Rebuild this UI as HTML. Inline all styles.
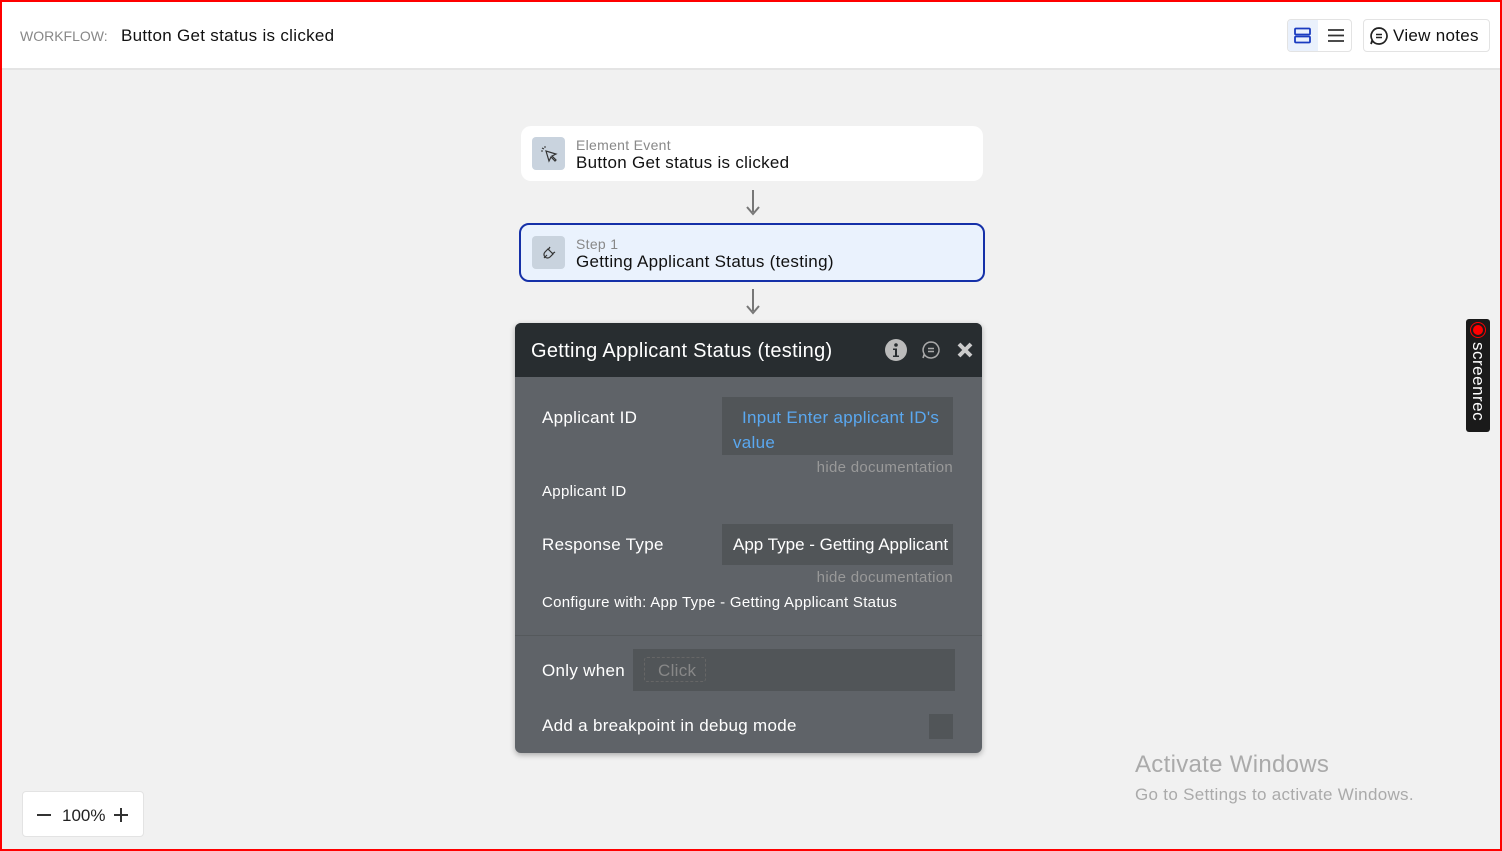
<!DOCTYPE html>
<html><head><meta charset="utf-8"><style>
*{box-sizing:border-box;margin:0;padding:0}
body{width:1502px;height:851px;overflow:hidden;font-family:"Liberation Sans",sans-serif;background:#f1f1f1;position:relative;letter-spacing:0.3px}
.frame{position:absolute;inset:0;border:2px solid #f00;pointer-events:none;z-index:10}
.hdr{position:absolute;left:0;top:0;width:1502px;height:70px;background:#fff;border-bottom:2px solid #e4e4e4}
.abs{position:absolute}
.card{position:absolute;background:#fff;border-radius:10px}
.ico{position:absolute;width:33px;height:33px;background:#c9d3de;border-radius:4px}
.small{font-size:14px;color:#888}
.big{font-size:17px;color:#111}
.panel{position:absolute;left:515px;top:323px;width:467px;height:430px;background:#5f6368;border-radius:6px;box-shadow:0 2px 6px rgba(0,0,0,.3);overflow:hidden}
.ph{height:54px;background:#282d30;color:#fff;font-size:20px;padding:17px 16px}
.lbl{position:absolute;color:#fff;font-size:17px}
.box{position:absolute;background:#515558}
.doc{position:absolute;color:#999;font-size:15px;right:29px;text-align:right}
</style></head><body>
<div class="hdr">
 <div class="abs" style="left:20px;top:28px;font-size:14px;color:#888;letter-spacing:0">WORKFLOW:</div>
 <div class="abs" style="left:121px;top:26px;font-size:17px;color:#111">Button Get status is clicked</div>
 <div class="abs" style="left:1287px;top:19px;width:65px;height:33px;border:1px solid #e3e3e3;border-radius:4px;background:#fff"></div>
 <div class="abs" style="left:1288px;top:20px;width:30px;height:31px;background:#eaf1fc;border-radius:3px 0 0 3px"></div>
 <svg class="abs" style="left:1293px;top:27px" width="20" height="17"><rect x="2" y="1.5" width="15" height="6" rx="1" fill="none" stroke="#1a3bc0" stroke-width="1.8"/><rect x="2" y="9.5" width="15" height="6" rx="1" fill="none" stroke="#1a3bc0" stroke-width="1.8"/></svg>
 <svg class="abs" style="left:1326px;top:27px" width="20" height="17"><path d="M2 3H18M2 8.5H18M2 14H18" stroke="#333" stroke-width="1.8"/></svg>
 <div class="abs" style="left:1363px;top:19px;width:127px;height:33px;border:1px solid #e3e3e3;border-radius:4px;background:#fff"></div>
 <svg class="abs" style="left:1369px;top:26px" width="20" height="20"><path d="M10 2a8 8 0 1 1-6.5 12.7L2 18l1.2-4A8 8 0 0 1 10 2z" fill="none" stroke="#222" stroke-width="1.7"/><path d="M7 8.5h6M7 11.5h6" stroke="#222" stroke-width="1.5"/></svg>
 <div class="abs" style="left:1393px;top:26px;font-size:17px;color:#111">View notes</div>
</div>

<div class="card" style="left:521px;top:126px;width:462px;height:55px">
 <div class="ico" style="left:11px;top:11px"></div>
 <svg class="abs" style="left:19px;top:19px" width="18" height="18"><path d="M6 6l3 10 2-4 4 4 1-1-4-4 4-2z" fill="none" stroke="#333" stroke-width="1.2"/><path d="M2 3l2 1M5 1v2M1 6h2" stroke="#333" stroke-width="1"/></svg>
 <div class="abs small" style="left:55px;top:11px">Element Event</div>
 <div class="abs big" style="left:55px;top:27px">Button Get status is clicked</div>
</div>
<svg class="abs" style="left:744px;top:190px" width="18" height="26"><path d="M9 0V22" stroke="#777" stroke-width="2"/><path d="M3 17L9 24L15 17" fill="none" stroke="#777" stroke-width="2"/></svg>

<div class="card" style="left:519px;top:223px;width:466px;height:59px;background:#eaf2fd;border:2px solid #1530a8">
 <div class="ico" style="left:11px;top:11px"></div>
 <svg class="abs" style="left:19px;top:19px" width="18" height="18"><path d="M4 14l3-3M8 5l5 5-3 3a3 3 0 0 1-5-5z M10 3l-2 3M15 8l-3 2" fill="none" stroke="#333" stroke-width="1.2"/></svg>
 <div class="abs small" style="left:55px;top:11px">Step 1</div>
 <div class="abs big" style="left:55px;top:27px">Getting Applicant Status (testing)</div>
</div>
<svg class="abs" style="left:744px;top:289px" width="18" height="26"><path d="M9 0V22" stroke="#777" stroke-width="2"/><path d="M3 17L9 24L15 17" fill="none" stroke="#777" stroke-width="2"/></svg>

<div class="panel">
 <div class="ph">Getting Applicant Status (testing)</div>
 <svg class="abs" style="left:370px;top:16px" width="22" height="22"><circle cx="11" cy="11" r="11" fill="#bbb"/><circle cx="11" cy="6" r="1.8" fill="#282d30"/><path d="M8 9.5h4v7h2v1.5H8v-1.5h2V11H8z" fill="#282d30"/></svg>
 <svg class="abs" style="left:406px;top:17px" width="20" height="20"><path d="M10 2a8 8 0 1 1-6.5 12.7L2 18l1.2-4A8 8 0 0 1 10 2z" fill="none" stroke="#aaa" stroke-width="1.5"/><path d="M7 8.5h6M7 11.5h6" stroke="#aaa" stroke-width="1.4"/></svg>
 <svg class="abs" style="left:441px;top:18px" width="18" height="18"><path d="M3 3L15 15M15 3L3 15" stroke="#ccc" stroke-width="4"/></svg>
 <div class="lbl" style="left:27px;top:85px">Applicant ID</div>
 <div class="box" style="left:207px;top:74px;width:231px;height:58px"></div>
 <div class="abs" style="left:218px;top:82px;width:220px;color:#5aa8f0;font-size:17px;line-height:25px;text-indent:9px">Input Enter applicant ID's value</div>
 <div class="doc" style="top:136px">hide documentation</div>
 <div class="lbl" style="left:27px;top:160px;font-size:15px">Applicant ID</div>
 <div class="lbl" style="left:27px;top:212px">Response Type</div>
 <div class="box" style="left:207px;top:201px;width:231px;height:41px"></div>
 <div class="abs" style="left:218px;top:212px;width:218px;overflow:hidden;white-space:nowrap;color:#fff;font-size:17px;letter-spacing:0">App Type - Getting Applicant</div>
 <div class="doc" style="top:246px">hide documentation</div>
 <div class="lbl" style="left:27px;top:271px;font-size:15px">Configure with: App Type - Getting Applicant Status</div>
 <div class="abs" style="left:0;top:312px;width:467px;height:1px;background:#55595c"></div>
 <div class="lbl" style="left:27px;top:338px">Only when</div>
 <div class="box" style="left:118px;top:326px;width:322px;height:42px"></div>
 <div class="abs" style="left:129px;top:334px;width:62px;height:25px;border:1px dashed #666;border-radius:3px;color:#888;font-size:17px;padding:3px 0 0 13px">Click</div>
 <div class="lbl" style="left:27px;top:393px">Add a breakpoint in debug mode</div>
 <div class="box" style="left:414px;top:391px;width:24px;height:25px"></div>
</div>

<div class="abs" style="left:1466px;top:319px;width:24px;height:113px;background:#1a1a1a;border-radius:3px"></div>
<div class="abs" style="left:1471px;top:323px;width:14px;height:14px;border-radius:50%;background:#f00;border:2px solid #1a1a1a;box-shadow:0 0 0 1px #f00"></div>
<div class="abs" style="left:1470px;top:342px;writing-mode:vertical-rl;color:#fff;font-size:17px;line-height:16px;letter-spacing:0.5px">screenrec</div>

<div class="abs" style="left:1135px;top:751px;font-size:24px;color:#aaa">Activate Windows</div>
<div class="abs" style="left:1135px;top:785px;font-size:17px;color:#aaa">Go to Settings to activate Windows.</div>

<div class="abs" style="left:22px;top:791px;width:122px;height:46px;background:#fff;border:1px solid #e3e3e3;border-radius:4px"></div>
<div class="abs" style="left:37px;top:814px;width:14px;height:2px;background:#333"></div>
<div class="abs" style="left:62px;top:806px;font-size:17px;color:#222;letter-spacing:0">100%</div>
<div class="abs" style="left:114px;top:814px;width:14px;height:2px;background:#333"></div>
<div class="abs" style="left:120px;top:808px;width:2px;height:14px;background:#333"></div>
<div class="frame"></div>
</body></html>
